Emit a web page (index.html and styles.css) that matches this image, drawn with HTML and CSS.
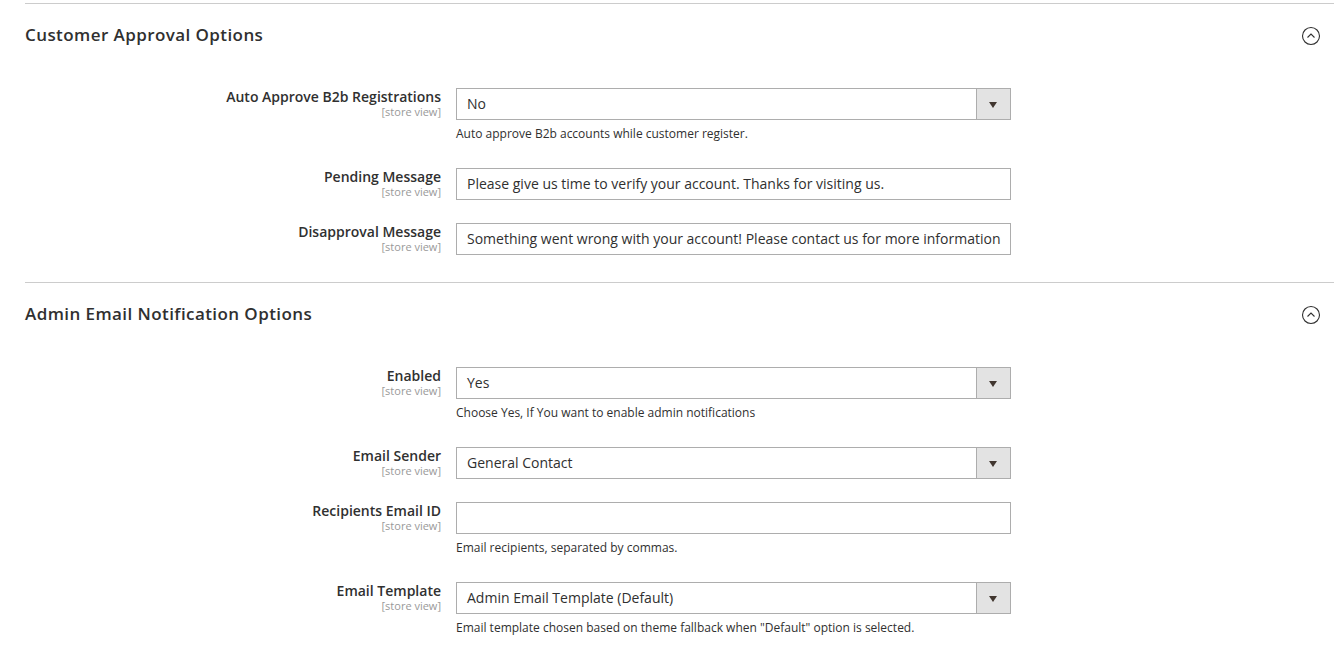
FILE: index.html
```html
<!DOCTYPE html>
<html lang="en">
<head>
  <meta charset="UTF-8">
  <title>Configuration</title>
  <link rel="stylesheet" href="styles.css">
</head>
<body>
  <div id="config">
    <!-- Customer Approval -->
    <section class="block">
      <div class="block-title">
        <h3>Customer Approval Options</h3>
        <span class="toggle">
          <svg width="20" height="20" viewBox="0 0 20 20"><circle cx="10" cy="10" r="8.5" fill="none" stroke="#303030" stroke-width="1.1"/><path d="M6.5 11.5 L10 8 L13.5 11.5" fill="none" stroke="#303030" stroke-width="1.1"/></svg>
        </span>
      </div>
      <div class="fields">
        <div class="row">
          <div class="label"><span>Auto Approve B2b Registrations</span><small>[store view]</small></div>
          <div class="control">
            <div class="select"><span>No</span><i class="arrow"></i></div>
            <p class="note">Auto approve B2b accounts while customer register.</p>
          </div>
        </div>
        <div class="row">
          <div class="label"><span>Pending Message</span><small>[store view]</small></div>
          <div class="control">
            <div class="input">Please give us time to verify your account. Thanks for visiting us.</div>
          </div>
        </div>
        <div class="row">
          <div class="label"><span>Disapproval Message</span><small>[store view]</small></div>
          <div class="control">
            <div class="input">Something went wrong with your account! Please contact us for more information</div>
          </div>
        </div>
      </div>
    </section>

    <!-- Admin Email -->
    <section class="block">
      <div class="block-title">
        <h3>Admin Email Notification Options</h3>
        <span class="toggle">
          <svg width="20" height="20" viewBox="0 0 20 20"><circle cx="10" cy="10" r="8.5" fill="none" stroke="#303030" stroke-width="1.1"/><path d="M6.5 11.5 L10 8 L13.5 11.5" fill="none" stroke="#303030" stroke-width="1.1"/></svg>
        </span>
      </div>
      <div class="fields">
        <div class="row">
          <div class="label"><span>Enabled</span><small>[store view]</small></div>
          <div class="control">
            <div class="select"><span>Yes</span><i class="arrow"></i></div>
            <p class="note">Choose Yes, If You want to enable admin notifications</p>
          </div>
        </div>
        <div class="row">
          <div class="label"><span>Email Sender</span><small>[store view]</small></div>
          <div class="control">
            <div class="select"><span>General Contact</span><i class="arrow"></i></div>
          </div>
        </div>
        <div class="row">
          <div class="label"><span>Recipients Email ID</span><small>[store view]</small></div>
          <div class="control">
            <div class="input"></div>
            <p class="note">Email recipients, separated by commas.</p>
          </div>
        </div>
        <div class="row">
          <div class="label"><span>Email Template</span><small>[store view]</small></div>
          <div class="control">
            <div class="select"><span>Admin Email Template (Default)</span><i class="arrow"></i></div>
            <p class="note">Email template chosen based on theme fallback when "Default" option is selected.</p>
          </div>
        </div>
      </div>
    </section>
  </div>
</body>
</html>
```

FILE: styles.css
```css
html, body {
  margin: 0;
  padding: 0;
  background: #ffffff;
  color: #303030;
  font-family: 'Open Sans', 'Liberation Sans', sans-serif;
}
#config {
  padding: 3px 10px 0 25px;
}
.block {
  border-top: 1px solid #cccccc;
}
.block-title {
  display: flex;
  align-items: center;
  justify-content: space-between;
  height: 62px;
}
.block-title h3 {
  margin: 0 0 2px;
  font-size: 17px;
  font-weight: 600;
  color: #303030;
  letter-spacing: 0.42px;
}
.toggle {
  display: flex;
  margin-right: 13px;
  margin-top: 1px;
}
.fields {
  padding-top: 22px;
  padding-bottom: 4px;
}
.row {
  display: flex;
  margin-bottom: 23px;
}
.label {
  width: 416px;
  flex: none;
  display: flex;
  flex-direction: column;
  align-items: flex-end;
  text-align: right;
}
.label span {
  font-size: 14px;
  font-weight: 600;
  line-height: 18px;
}
.label small {
  font-size: 11px;
  line-height: 12px;
  color: #999999;
}
.control {
  margin-left: 15px;
  width: 555px;
}
.input, .select {
  box-sizing: border-box;
  height: 32px;
  border: 1px solid #adadad;
  font-size: 14px;
  line-height: 30px;
  padding: 0 10px;
  white-space: nowrap;
  overflow: hidden;
}
.select {
  display: flex;
  padding-right: 0;
}
.select span {
  flex: 1;
}
.select .arrow {
  width: 33px;
  flex: none;
  border-left: 1px solid #adadad;
  background: #e3e3e3;
  position: relative;
}
.select .arrow::after {
  content: "";
  position: absolute;
  left: 12px;
  top: 13px;
  border-left: 4.5px solid transparent;
  border-right: 4.5px solid transparent;
  border-top: 6px solid #41362f;
}
.note {
  margin: 5px 0 0;
  font-size: 12px;
  line-height: 18px;
  padding-bottom: 2px;
}
```
